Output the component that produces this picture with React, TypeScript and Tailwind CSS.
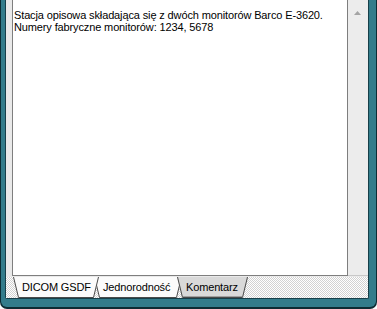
import React from "react";

function Tab({
  label,
  width,
  selected,
  className,
}: {
  label: string;
  width: number;
  selected?: boolean;
  className?: string;
}) {
  const h = 21;
  const fill = selected ? "#d9d9d9" : "#fbfbfb";
  return (
    <div
      className={`relative flex h-[21px] items-center pl-[9px] ${className ?? ""}`}
      style={{ width }}
    >
      <svg
        className="absolute left-0 top-0"
        width={width}
        height={h}
        viewBox={`0 0 ${width} ${h}`}
      >
        <polygon
          points={`0,0 5,${h - 1} ${width - 5},${h - 1} ${width},0`}
          fill={fill}
        />
        <polyline
          points={`0.5,0 5.5,${h - 0.5} ${width - 5.5},${h - 0.5} ${width - 0.5},0`}
          fill="none"
          stroke="#4a4a4a"
          strokeWidth={1}
        />
        {selected && (
          <polyline
            points={`6,${h - 1.5} ${width - 6},${h - 1.5}`}
            fill="none"
            stroke="#a0a0a0"
            strokeWidth={1}
          />
        )}
      </svg>
      <span className="relative text-[11px] leading-[13px] tracking-[-0.15px] text-black">{label}</span>
    </div>
  );
}

export default function App() {
  return (
    <div className="h-[309px] w-[377px] rounded-b-[7px] bg-[#0d2c34] px-px pb-[2px] font-['Liberation_Sans',Arial,sans-serif]">
      <div className="h-full rounded-b-[6px] bg-[#337c8b] pb-[8px] pl-[4px] pr-[7px]">
        <div className="flex h-full flex-col rounded-b-[2px] border-x border-b border-[#173f49] bg-[#e9e9e9]">
          <div className="flex h-[276px] pl-[6px]">
            <div className="w-[336px] border-x border-b border-[#7e7e7e] bg-white pl-[1px] pt-[9px] text-[11px] leading-[12px] tracking-[-0.13px] text-black">
              <div>Stacja opisowa składająca się z dwóch monitorów Barco E-3620.</div>
              <div>Numery fabryczne monitorów: 1234, 5678</div>
            </div>
            <div className="flex w-[20px] flex-col items-center border-b border-[#c8c8c8] bg-[#ececec] pt-[11px]">
              <svg width="7" height="4" viewBox="0 0 7 4" className="-ml-[2px]">
                <polygon points="3.5,0 7,4 0,4" fill="#a4a4a4" />
              </svg>
            </div>
          </div>
          <div className="h-px" />
          <div className="flex h-[21px] bg-[image:repeating-conic-gradient(#d2d2d2_0%_25%,#ffffff_0%_50%)] bg-[length:2px_2px] pl-[7px]">
            <Tab label="DICOM GSDF" width={86} className="z-20" />
            <Tab label="Jednorodność" width={88} className="z-10 -ml-[5px]" />
            <Tab label="Komentarz" width={71} selected className="z-30 -ml-[5px]" />
          </div>
        </div>
      </div>
    </div>
  );
}
